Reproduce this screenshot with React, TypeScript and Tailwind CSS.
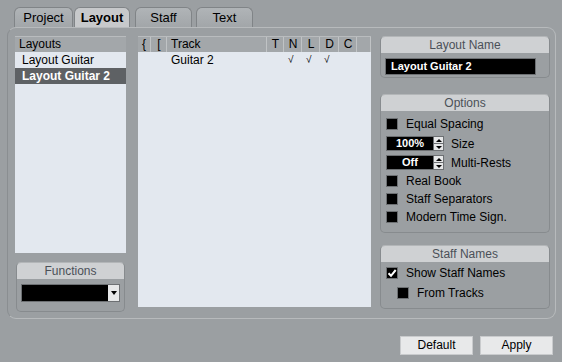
import React from 'react';

const font = { fontFamily: '"Liberation Sans", Arial, sans-serif' };

const Check = ({ checked = false }: { checked?: boolean }) => (
  <div className="w-[12px] h-[12px] bg-black border border-[#6d7073] flex items-center justify-center shrink-0">
    {checked && (
      <svg width="10" height="10" viewBox="0 0 10 10">
        <path d="M1.5 5.2 L4 7.8 L8.7 2" stroke="#fff" strokeWidth="2" fill="none" />
      </svg>
    )}
  </div>
);

const Spin = ({ value }: { value: string }) => (
  <div className="flex h-[15px] shrink-0">
    <div className="w-[48px] bg-black border border-[#6d7073] text-white font-bold text-[11px] leading-[13px] flex items-center justify-center">
      {value}
    </div>
    <div className="w-[10px] flex flex-col border-y border-r border-[#6d7073]">
      <div className="flex-1 bg-[#e6e7e8] flex items-center justify-center border-b border-[#6d7073]">
        <div className="w-0 h-0 border-x-[3px] border-x-transparent border-b-[3px] border-b-black" />
      </div>
      <div className="flex-1 bg-[#e6e7e8] flex items-center justify-center">
        <div className="w-0 h-0 border-x-[3px] border-x-transparent border-t-[3px] border-t-black" />
      </div>
    </div>
  </div>
);

const Group = ({ title, className, children }: { title: string; className: string; children: React.ReactNode }) => (
  <div className={`rounded-[5px] border border-[#878b8e] border-t-[#b3b6b8] overflow-hidden flex flex-col ${className}`}>
    <div className="h-[16px] bg-[#cfd1d3] text-[#4b5058] text-[12px] leading-[16px] text-center shrink-0">{title}</div>
    {children}
  </div>
);

const Tab = ({ label, active, w }: { label: string; active?: boolean; w: string }) => (
  <div
    className={`${w} h-[20px] rounded-t-[6px] border border-b-0 border-[#808487] text-[13px] leading-[19px] text-center text-black ${
      active ? 'bg-[#c7c9cb] font-bold' : 'bg-gradient-to-b from-[#b0b4b7] to-[#a2a6a9]'
    }`}
  >
    {label}
  </div>
);

export default function App() {
  const cols = [
    { t: '{', w: 'w-[13px]' },
    { t: '[', w: 'w-[15px]' },
    { t: 'Track', w: 'w-[99px]', left: true },
    { t: 'T', w: 'w-[16px]' },
    { t: 'N', w: 'w-[17px]' },
    { t: 'L', w: 'w-[17px]' },
    { t: 'D', w: 'w-[18px]' },
    { t: 'C', w: 'w-[17px]' },
    { t: '', w: 'flex-1' },
  ];
  return (
    <div className="w-[562px] h-[362px] bg-[#9b9fa2] relative overflow-hidden" style={font}>
      <div className="flex pt-[7px] pl-[14px] gap-[1px]">
        <Tab label="Project" w="w-[59px]" />
        <Tab label="Layout" active w="w-[56px]" />
        <div className="w-[3px]" />
        <Tab label="Staff" w="w-[57px]" />
        <div className="w-[2px]" />
        <Tab label="Text" w="w-[57px]" />
      </div>
      <div className="ml-[7px] w-[549px] h-[292px] rounded-[9px] border border-[#b7babc] border-l-[#8a8e91] flex pt-[8px] pl-[7px]">
        <div className="w-[111px] flex flex-col">
          <div className="h-[217px] flex flex-col bg-[#e3e8ef]">
            <div className="h-[16px] bg-[#a3a7aa] border-t border-[#b9bcbe] text-[12px] leading-[15px] pl-[4px] text-black">Layouts</div>
            <div className="h-[16px] text-[12px] leading-[16px] pl-[7px] text-black">Layout Guitar</div>
            <div className="h-[16px] bg-[#5e6164] text-[12px] leading-[16px] pl-[7px] text-white font-bold">Layout Guitar 2</div>
          </div>
          <Group title="Functions" className="mt-[9px] h-[50px] mx-[1px]">
            <div className="flex justify-center pt-[5px]">
              <div className="w-[99px] h-[18px] bg-black border border-[#6d7073] flex justify-end">
                <div className="w-[11px] bg-[#e6e7e8] flex items-center justify-center">
                  <div className="w-0 h-0 border-x-[3.5px] border-x-transparent border-t-[4px] border-t-black" />
                </div>
              </div>
            </div>
          </Group>
        </div>
        <div className="ml-[12px] w-[233px] h-[271px] flex flex-col bg-[#e3e8ef]">
          <div className="h-[16px] flex bg-[#a3a7aa] gap-[1px] border-t border-[#b9bcbe]">
            {cols.map((c, i) => (
              <div
                key={i}
                className={`${c.w} h-full border-r border-[#c0c3c5] text-[12px] leading-[15px] text-black ${c.left ? 'pl-[3px]' : 'text-center'}`}
              >
                {c.t}
              </div>
            ))}
          </div>
          <div className="h-[16px] flex text-[12px] leading-[16px] text-black">
            <div className="w-[33px]" />
            <div className="w-[114px]">Guitar 2</div>
            <div className="w-[18px] pl-[3px] text-[10px]">√</div>
            <div className="w-[18px] pl-[3px] text-[10px]">√</div>
            <div className="w-[18px] pl-[3px] text-[10px]">√</div>
          </div>
        </div>
        <div className="ml-[9px] w-[170px] flex flex-col">
          <Group title="Layout Name" className="h-[42px]">
            <div className="pl-[4px] pt-[5px]">
              <div className="w-[151px] h-[17px] bg-black border border-[#6d7073] text-white font-bold text-[11px] leading-[15px] pl-[5px]">
                Layout Guitar 2
              </div>
            </div>
          </Group>
          <Group title="Options" className="mt-[16px] h-[139px]">
            <div className="flex flex-col pl-[5px] pt-[6px] text-[12px] text-black">
              <div className="flex items-center gap-[8px] h-[14px]">
                <Check />
                <span>Equal Spacing</span>
              </div>
              <div className="flex items-center gap-[7px] h-[15px] mt-[5px]">
                <Spin value="100%" />
                <span>Size</span>
              </div>
              <div className="flex items-center gap-[7px] h-[15px] mt-[4px]">
                <Spin value="Off" />
                <span>Multi-Rests</span>
              </div>
              <div className="flex items-center gap-[8px] h-[14px] mt-[4px]">
                <Check />
                <span>Real Book</span>
              </div>
              <div className="flex items-center gap-[8px] h-[14px] mt-[4px]">
                <Check />
                <span>Staff Separators</span>
              </div>
              <div className="flex items-center gap-[8px] h-[14px] mt-[4px]">
                <Check />
                <span>Modern Time Sign.</span>
              </div>
            </div>
          </Group>
          <Group title="Staff Names" className="mt-[12px] h-[64px]">
            <div className="flex flex-col pl-[5px] pt-[4px] text-[12px] text-black">
              <div className="flex items-center gap-[8px] h-[14px]">
                <Check checked />
                <span>Show Staff Names</span>
              </div>
              <div className="flex items-center gap-[8px] h-[14px] mt-[6px] pl-[11px]">
                <Check />
                <span>From Tracks</span>
              </div>
            </div>
          </Group>
        </div>
      </div>
      <div className="flex justify-end gap-[7px] pr-[9px] mt-[17px]">
        <div className="w-[73px] h-[19px] bg-[#e8e9ea] border border-[#c9cbcd] text-[12px] leading-[17px] text-center text-black">Default</div>
        <div className="w-[73px] h-[19px] bg-[#e8e9ea] border border-[#c9cbcd] text-[12px] leading-[17px] text-center text-black">Apply</div>
      </div>
    </div>
  );
}
